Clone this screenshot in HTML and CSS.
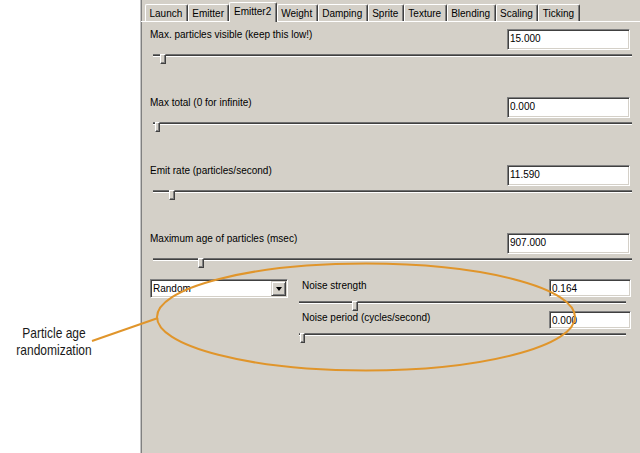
FILE: index.html
```html
<!DOCTYPE html>
<html>
<head>
<meta charset="utf-8">
<link rel="stylesheet" href="styles.css">
</head>
<body>
<div class="screen">
  <div class="gutter"></div>
  <div class="panel">
    <div class="tabs">
      <span class="tab">Launch</span>
      <span class="tab">Emitter</span>
      <span class="tab active">Emitter2</span>
      <span class="tab">Weight</span>
      <span class="tab">Damping</span>
      <span class="tab">Sprite</span>
      <span class="tab">Texture</span>
      <span class="tab">Blending</span>
      <span class="tab">Scaling</span>
      <span class="tab">Ticking</span>
    </div>
    <div class="page">
      <div class="field">
        <div class="head"><span class="label">Max. particles visible (keep this low!)</span><div class="edit">15.000</div></div>
        <div class="slider"><div class="track"></div><div class="thumb" style="left:10px"></div></div>
      </div>
      <div class="field">
        <div class="head"><span class="label">Max total (0 for infinite)</span><div class="edit">0.000</div></div>
        <div class="slider"><div class="track"></div><div class="thumb narrow" style="left:5px"></div></div>
      </div>
      <div class="field">
        <div class="head"><span class="label">Emit rate (particles/second)</span><div class="edit">11.590</div></div>
        <div class="slider"><div class="track"></div><div class="thumb" style="left:19px"></div></div>
      </div>
      <div class="field short">
        <div class="head"><span class="label">Maximum age of particles (msec)</span><div class="edit">907.000</div></div>
        <div class="slider"><div class="track"></div><div class="thumb" style="left:48px"></div></div>
      </div>
      <div class="noise-row">
        <div class="combo">
          <span class="combo-text">Random</span>
          <span class="drop"><span class="arrow"></span></span>
        </div>
        <div class="noise">
          <div class="sub">
            <div class="head"><span class="label sublabel">Noise strength</span><div class="edit small">0.164</div></div>
            <div class="slider first"><div class="track"></div><div class="thumb" style="left:53px"></div></div>
          </div>
          <div class="sub">
            <div class="head"><span class="label sublabel">Noise period (cycles/second)</span><div class="edit small">0.000</div></div>
            <div class="slider second"><div class="track"></div><div class="thumb narrow" style="left:1px"></div></div>
          </div>
        </div>
      </div>
    </div>
  </div>
  <svg class="annot" width="640" height="453" viewBox="0 0 640 453">
    <ellipse cx="366" cy="317" rx="209" ry="53.5" fill="none" stroke="#e0952b" stroke-width="2"/>
    <line x1="92" y1="341" x2="158" y2="318" stroke="#e0952b" stroke-width="2"/>
  </svg>
  <div class="callout">Particle age<br>randomization</div>
</div>
</body>
</html>
```

FILE: styles.css
```css
html, body {
  margin: 0;
  padding: 0;
  background: #ffffff;
}

body {
  font-family: "Liberation Sans", Arial, sans-serif;
  font-size: 10px;
  color: #000000;
}

.screen {
  position: relative;
  width: 640px;
  height: 453px;
  display: flex;
  overflow: hidden;
}

.gutter {
  width: 140px;
  flex: none;
  background: #ffffff;
}

.panel {
  flex: 1;
  display: flex;
  flex-direction: column;
  background: #d4d0c8;
  border-left: 1px solid #c4c4c4;
  box-shadow: inset 1px 0 0 #808080;
}

/* tabs */
.tabs {
  display: flex;
  align-items: flex-end;
  height: 21px;
  padding-left: 4px;
  border-bottom: 1px solid #ffffff;
}

.tab {
  box-sizing: border-box;
  height: 17px;
  padding: 3px 4.5px 0 3.5px;
  line-height: 12px;
  white-space: nowrap;
  border-top: 1px solid #ffffff;
  border-left: 1px solid #ffffff;
  border-right: 1px solid #404040;
  border-radius: 2px 2px 0 0;
  box-shadow: inset -1px 0 0 #808080;
  background: #d4d0c8;
}

.tab.active {
  height: 20px;
  margin-bottom: -1px;
}

/* page */
.page {
  padding: 7px 7px 0 9px;
}

.field {
  height: 68px;
}

.field.short {
  height: 46px;
}

.head {
  display: flex;
  justify-content: space-between;
  align-items: flex-start;
}

.label {
  line-height: 12px;
  white-space: nowrap;
}

.edit {
  box-sizing: border-box;
  width: 123px;
  height: 21px;
  margin-right: 3px;
  padding: 3px 0 0 2px;
  line-height: 12px;
  background: #ffffff;
  border: 1px solid;
  border-color: #808080 #ffffff #ffffff #808080;
  box-shadow: inset 1px 1px 0 #404040, inset -1px -1px 0 #d4d0c8;
}

.edit.small {
  width: 82px;
  height: 18px;
  margin-right: 2px;
}

.slider {
  position: relative;
  height: 10px;
  margin-top: 3px;
}

.track {
  height: 3px;
  margin: 4px 1px 0 3px;
  background: linear-gradient(#6e6e6e 0 1px, #404040 1px 2px, #ffffff 2px 3px);
}

.thumb {
  position: absolute;
  top: 0;
  box-sizing: border-box;
  width: 6px;
  height: 10px;
  background: #d4d0c8;
  border: 1px solid;
  border-color: #ffffff #404040 #404040 #ffffff;
  box-shadow: inset -1px -1px 0 #808080;
}

.thumb.narrow {
  width: 5px;
}

/* noise row */
.noise-row {
  display: flex;
  align-items: flex-start;
}

.combo {
  box-sizing: border-box;
  width: 138px;
  height: 19px;
  display: flex;
  justify-content: space-between;
  align-items: flex-start;
  padding: 0 1px 0 2px;
  background: #ffffff;
  border: 1px solid;
  border-color: #808080 #ffffff #ffffff #808080;
  box-shadow: inset 1px 1px 0 #404040, inset -1px -1px 0 #d4d0c8;
}

.combo-text {
  padding-top: 3px;
  line-height: 12px;
}

.drop {
  box-sizing: border-box;
  width: 15px;
  height: 15px;
  margin-top: 1px;
  display: flex;
  align-items: center;
  justify-content: center;
  background: #d4d0c8;
  border: 1px solid;
  border-color: #d4d0c8 #404040 #404040 #d4d0c8;
  box-shadow: inset 1px 1px 0 #ffffff, inset -1px -1px 0 #808080;
}

.arrow {
  width: 0;
  height: 0;
  border-left: 3.5px solid transparent;
  border-right: 3.5px solid transparent;
  border-top: 4px solid #000000;
  margin-top: 1px;
}

.noise {
  flex: 1;
  margin-left: 11px;
}

.sub {
  height: 32px;
}

.sublabel {
  padding-left: 3px;
  padding-top: 1px;
}

.noise .track {
  margin-left: 0;
  margin-right: 7px;
}

.slider.first {
  margin-top: 0;
}

.slider.second {
  margin-top: 3px;
}

/* annotation */
.annot {
  position: absolute;
  left: 0;
  top: 0;
  pointer-events: none;
}

.callout {
  position: absolute;
  left: 0;
  top: 324px;
  width: 108px;
  text-align: center;
  font-size: 15px;
  line-height: 17px;
  color: #1a1a1a;
  transform: scaleX(0.8);
  transform-origin: 54px 0;
}
```
